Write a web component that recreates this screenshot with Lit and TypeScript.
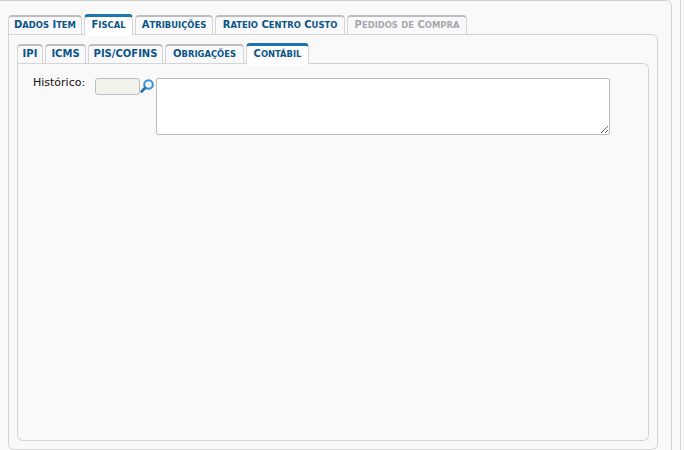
import { LitElement, html, css } from "lit";
import { customElement } from "lit/decorators.js";
import { classMap } from "lit/directives/class-map.js";

const ROW1 = [
  { t: "Dados Item", w: 74 },
  { t: "Fiscal", w: 49, active: true },
  { t: "Atribuições", w: 78 },
  { t: "Rateio Centro Custo", w: 130 },
  { t: "Pedidos de Compra", w: 120, disabled: true },
];
const ROW2 = [
  { t: "IPI", w: 26 },
  { t: "ICMS", w: 41 },
  { t: "PIS/COFINS", w: 75 },
  { t: "Obrigações", w: 79 },
  { t: "Contábil", w: 63, active: true },
];

@customElement("app-root")
export class AppRoot extends LitElement {
  static styles = css`
    :host {
      display: block;
      width: 684px;
      height: 450px;
      overflow: hidden;
      background: #f9f9f9;
      font-family: "DejaVu Sans", Verdana, sans-serif;
    }
    .page { display: flex; height: 450px; }
    .outer {
      box-sizing: border-box;
      flex: none;
      width: 673px;
      height: 470px;
      margin-left: -1px;
      padding: 13px 13px 0 8px;
      border: 1px solid #d5d5d5;
      border-top: 1px solid #ccd4c8;
      border-radius: 0 6px 0 0;
      background: #f9f9f9;
    }
    .edge { flex: none; width: 1px; margin-left: 8px; background: #d5d5d5; }
    .tabs { display: flex; height: 20px; gap: 2px; position: relative; z-index: 1; }
    .tab {
      box-sizing: border-box;
      height: 20px;
      margin-top: 1px;
      border: 1px solid #d5d5d5;
      border-top: 2px solid #bdbdbd;
      border-radius: 4px 4px 0 0;
      background: #f9f9fb;
      color: #0a5488;
      font-size: 10px;
      font-weight: 700;
      line-height: 15px;
      text-align: center;
      white-space: nowrap;
    }
    .tab.active {
      height: 22px;
      margin-top: 0;
      border-top: 3px solid #1a75b0;
      border-bottom-color: #fff;
      line-height: 16px;
      background: #fff;
    }
    .tab.disabled { color: #a8a8a8; }
    .sc { font-size: 8.4px; text-transform: uppercase; }
    .panel {
      box-sizing: border-box;
      border: 1px solid #d5d5d5;
      border-top-color: #ccd4c8;
      border-radius: 0 6px 6px 6px;
      background: #f9f9f9;
    }
    .mid { height: 416px; width: 650px; padding: 8px 8px 0 8px; }
    .inner { height: 378px; width: 632px; padding: 14px 0 0 15px; }
    .form { display: flex; align-items: flex-start; }
    label { width: 62px; flex: none; font-size: 11px; line-height: 12px; margin-top: -2px; padding-top: 1px; color: #111; }
    input {
      box-sizing: border-box;
      flex: none;
      width: 45px;
      height: 17px;
      padding: 0;
      margin: 0;
      border: 1px solid #bdbdbd;
      border-radius: 3px;
      background: #f0f3e9;
    }
    svg { flex: none; display: block; margin: 0 2px 0 0; }
    textarea {
      box-sizing: border-box;
      flex: none;
      width: 454px;
      height: 57px;
      margin: 0;
      padding: 0;
      border: 1px solid #bdbdbd;
      border-radius: 2px;
      background: #fff;
      display: block;
      outline: none;
    }
  `;

  /** Lowercase runs are drawn as small capitals at a fixed size, uppercase stays at the base size. */
  private caps(text: string) {
    return text.split(/(\p{Ll}+)/u).map((part) =>
      /^\p{Ll}/u.test(part) ? html`<span class="sc">${part}</span>` : part
    );
  }

  private tab(t: { t: string; w: number; active?: boolean; disabled?: boolean }) {
    return html`<div
      class=${classMap({ tab: true, active: !!t.active, disabled: !!t.disabled })}
      style="width:${t.w}px"
    >${this.caps(t.t)}</div>`;
  }

  render() {
    return html`<div class="page">
      <div class="outer">
        <div class="tabs">${ROW1.map((t) => this.tab(t))}</div>
        <div class="panel mid">
          <div class="tabs">${ROW2.map((t) => this.tab(t))}</div>
          <div class="panel inner">
            <div class="form">
              <label>Histórico:</label>
              <input type="text" />
              <svg width="14" height="16" viewBox="0 0 14 16" aria-hidden="true">
                <circle cx="8.5" cy="6.5" r="4.3" fill="#e8f3fb" stroke="#3a93d8" stroke-width="2" />
                <path d="M5 10 L1.6 13.6" stroke="#1a6fb5" stroke-width="2.6" stroke-linecap="round" />
              </svg>
              <textarea></textarea>
            </div>
          </div>
        </div>
      </div>
      <div class="edge"></div>
    </div>`;
  }
}
